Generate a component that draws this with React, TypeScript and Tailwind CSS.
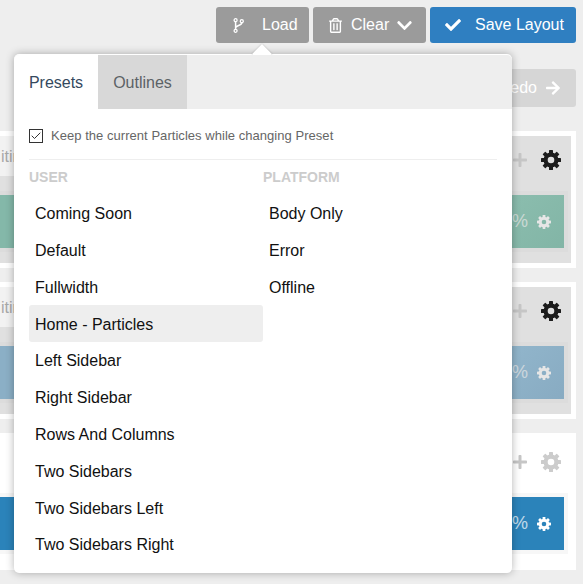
import { FaArrowRight, FaCheck, FaChevronDown, FaPlus, FaRegTrashAlt } from "react-icons/fa";
import { Check } from "lucide-react";

const userPresets = [
  "Coming Soon",
  "Default",
  "Fullwidth",
  "Home - Particles",
  "Left Sidebar",
  "Right Sidebar",
  "Rows And Columns",
  "Two Sidebars",
  "Two Sidebars Left",
  "Two Sidebars Right",
];

const platformPresets = ["Body Only", "Error", "Offline"];

const toothAngles = [0, 45, 90, 135, 180, 225, 270, 315];

function Cog({ className }: { className: string }) {
  return (
    <svg viewBox="0 0 20 20" className={className} fill="currentColor">
      <circle cx="10" cy="10" r="5.4" fill="none" stroke="currentColor" strokeWidth="4.2" />
      {toothAngles.map((a) => (
        <rect key={a} x="8" y="0" width="4" height="5" rx="0.6" transform={`rotate(${a} 10 10)`} />
      ))}
    </svg>
  );
}

function Fork({ className }: { className: string }) {
  return (
    <svg viewBox="0 0 11 15" className={className} fill="none" stroke="currentColor" strokeWidth="1.3">
      <circle cx="2.6" cy="2.2" r="1.5" />
      <circle cx="2.6" cy="12.8" r="1.5" />
      <circle cx="8.8" cy="3.2" r="1.5" />
      <path d="M2.6 3.7V11.3M8.8 4.7C8.8 8 2.6 7 2.6 10" strokeWidth="1.5" />
    </svg>
  );
}

function Section({ bar, dim }: { bar: string; dim: boolean }) {
  return (
    <div className="h-[137px] bg-white py-[5px] pr-[5px] mb-[14px] last:mb-0">
      <div className={`h-full flex flex-col ${dim ? "bg-[#e0e0e0]" : "bg-white"}`}>
        <div className="h-[55px] flex items-start">
          {dim && (
            <div className="w-[60px] h-[40px] bg-[#f2f2f2] overflow-hidden flex items-center pt-px pl-px text-[16px] text-[#a8a8a8]">
              iting
            </div>
          )}
          <div className="flex-1 h-[48px] flex items-center justify-end pr-[10px] gap-[13px]">
            <FaPlus className="w-[16px] h-[16px] text-[#c6c6c6]" />
            <Cog className={`w-[20px] h-[20px] ${dim ? "text-[#1c1c1c]" : "text-[#cccccc]"}`} />
          </div>
        </div>
        <div className={`h-[61px] py-[4px] pr-[4px] mr-[3px] ${dim ? "bg-[#dcdcdc]" : "bg-[#f7f7f7]"}`}>
          <div className={`h-[53px] flex items-center justify-end pr-[13px] gap-[9px] ${dim ? "text-[#e6e6e6]" : "text-white"} ${bar}`}>
            <span className="text-[18px] opacity-70">%</span>
            <Cog className="w-[14px] h-[14px]" />
          </div>
        </div>
      </div>
    </div>
  );
}

function PresetColumn({ title, items, active }: { title: string; items: string[]; active?: string }) {
  return (
    <div className="w-[234px]">
      <div className="h-[35px] flex items-center text-[14px] font-bold text-[#cccccc]">{title}</div>
      {items.map((item) => (
        <div
          key={item}
          className={`h-[36.8px] pl-[6px] pt-[1.5px] flex items-center text-[16px] text-[#111111] rounded-[3px] ${item === active ? "bg-[#eeeeee]" : ""}`}
        >
          {item}
        </div>
      ))}
    </div>
  );
}

export default function App() {
  return (
    <div className="relative w-[583px] h-[584px] overflow-hidden bg-[#eeeeee] font-['Liberation_Sans',Arial,sans-serif]">
      <div className="h-[62px] pt-[7px] pr-[7px] flex justify-end gap-[4px] text-white text-[16px]">
        <button className="w-[93px] h-[36px] rounded-[3px] bg-[#9b9b9b] flex items-center pl-[17px] gap-[18px]">
          <Fork className="w-[11px] h-[15px]" />
          Load
        </button>
        <button className="w-[113px] h-[36px] rounded-[3px] bg-[#9b9b9b] flex items-center pl-[16px] gap-[9px]">
          <FaRegTrashAlt className="w-[13px] h-[15px]" />
          Clear
          <FaChevronDown className="w-[17px] h-[17px] ml-[-2px]" />
        </button>
        <button className="w-[146px] h-[36px] rounded-[3px] bg-[#2f7fc1] flex items-center pl-[15px] gap-[14px]">
          <FaCheck className="w-[16px] h-[16px]" />
          Save Layout
        </button>
      </div>

      <div className="h-[69px] pt-[7px] pr-[7px] flex justify-end items-start">
        <div className="w-[120px] h-[38px] rounded-[3px] bg-[#d6d6d6] flex items-center justify-end pr-[15px] gap-[8px] text-white text-[16px]">
          Redo
          <FaArrowRight className="w-[16px] h-[16px]" />
        </div>
      </div>

      <div className="pr-[7px]">
        <Section bar="bg-[linear-gradient(135deg,#84b8a9_0%,#84b8a9_70%,#8abcad_85%,#82b5a6_100%)]" dim />
        <Section bar="bg-[linear-gradient(135deg,#8bafc6_0%,#8bafc6_70%,#90b4ca_85%,#88abc2_100%)]" dim />
        <Section bar="bg-[#2b83ba]" dim={false} />
      </div>

      {/* presets popover */}
      <div className="absolute left-[14px] top-[54px] w-[498px] h-[519px] rounded-[5px] bg-white shadow-[0_0_8px_rgba(0,0,0,0.3)]">
        <div className="absolute left-[241px] top-[-7px] w-[14px] h-[14px] rotate-45 bg-white shadow-[0_0_2px_rgba(0,0,0,0.25)]" />
        <div className="relative h-[54px] mt-px flex bg-[#eeeeee] rounded-t-[5px] text-[16px]">
          <div className="w-[84px] pt-[2px] bg-white rounded-tl-[5px] flex items-center justify-center text-[#34495e]">Presets</div>
          <div className="w-[89px] pt-[2px] bg-[#d8d8d8] flex items-center justify-center text-[#5c6266]">Outlines</div>
        </div>
        <div className="mx-[15px] h-[51px] border-b border-[#eeeeee] flex items-center gap-[8px] text-[13px] tracking-[0.04px] text-[#666666]">
          <span className="mt-[4px] w-[14px] h-[14px] border border-[#333333] flex items-center justify-center">
            <Check className="w-[12px] h-[12px] text-[#333333]" strokeWidth={2} />
          </span>
          <span className="pt-[3px]">Keep the current Particles while changing Preset</span>
        </div>
        <div className="mx-[15px] flex">
          <PresetColumn title="USER" items={userPresets} active="Home - Particles" />
          <PresetColumn title="PLATFORM" items={platformPresets} />
        </div>
      </div>
    </div>
  );
}
